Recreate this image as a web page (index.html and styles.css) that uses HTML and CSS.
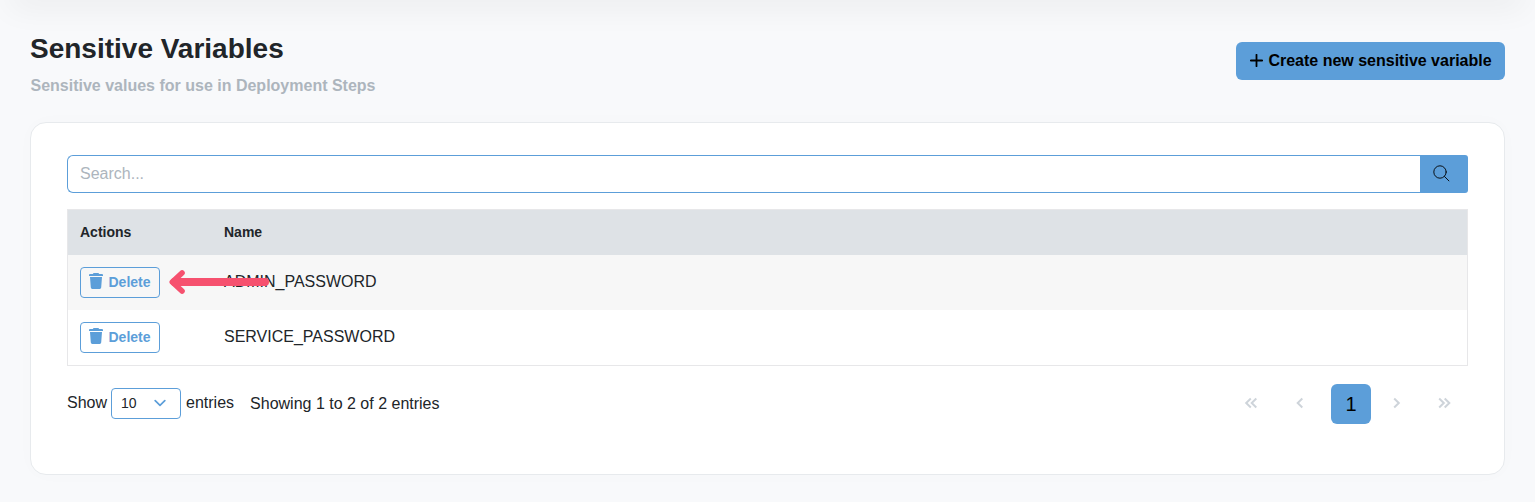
FILE: index.html
```html
<!DOCTYPE html>
<html lang="en">
<head>
<meta charset="utf-8">
<title>Sensitive Variables</title>
<link rel="stylesheet" href="styles.css">
</head>
<body>
<div class="topbar"></div>
<main class="page">
  <header class="page-header">
    <div class="heading">
      <h1 class="title">Sensitive Variables</h1>
      <p class="subtitle">Sensitive values for use in Deployment Steps</p>
    </div>
    <button class="create"><svg width="13" height="13" viewBox="0 0 13 13"><path d="M6.500 .8v11.400M.8 6.500h11.400" fill="none" stroke="#000" stroke-width="1.800" stroke-linecap="round"/></svg>Create new sensitive variable</button>
  </header>
  <section class="card">
    <div class="search">
      <input class="search-input" type="text" placeholder="Search...">
      <button class="search-button" aria-label="Search"><svg width="17" height="17" viewBox="0 0 17 17"><g fill="none" stroke="#000" stroke-width=".9" stroke-linecap="round"><circle cx="7" cy="7" r="6.200"/><path d="M11.500 11.500l4.400 4.400"/></g></svg></button>
    </div>
    <table class="table">
      <thead>
        <tr><th class="actions">Actions</th><th>Name</th></tr>
      </thead>
      <tbody>
        <tr>
          <td class="actions"><button class="delete"><svg width="14" height="16" viewBox="0 0 14 16"><path d="M4.600 0h4.800l.8 1H13q1 0 1 1v1H0V2q0-1 1-1h2.800zM1 4h12l-.8 10.600q-.1 1.400-1.500 1.400H3.300q-1.400 0-1.500-1.400z" fill="#5c9ed9"/></svg>Delete</button>
            <svg class="pointer" width="102" height="26" viewBox="0 0 102 26"><path d="M14 4L4.300 13 14 22M5 13h92" fill="none" stroke="#f6516f" stroke-width="5.600" stroke-linecap="round" stroke-linejoin="round"/><path d="M6.500 13h90.500" stroke="#f6516f" stroke-width="8" stroke-linecap="round"/></svg>
          </td>
          <td>ADMIN_PASSWORD</td>
        </tr>
        <tr>
          <td class="actions"><button class="delete"><svg width="14" height="16" viewBox="0 0 14 16"><path d="M4.600 0h4.800l.8 1H13q1 0 1 1v1H0V2q0-1 1-1h2.800zM1 4h12l-.8 10.600q-.1 1.400-1.500 1.400H3.300q-1.400 0-1.500-1.400z" fill="#5c9ed9"/></svg>Delete</button></td>
          <td>SERVICE_PASSWORD</td>
        </tr>
      </tbody>
    </table>
    <footer class="footer">
      <div class="length"><span class="length-label">Show</span>
        <div class="select"><span>10</span><svg width="12" height="8" viewBox="0 0 12 8"><path d="M1.200 1.700L6 6.300l4.800-4.600" fill="none" stroke="#5c9ed9" stroke-width="1.700" stroke-linecap="round" stroke-linejoin="round"/></svg></div>
        <span class="length-label">entries</span></div>
      <div class="info">Showing 1 to 2 of 2 entries</div>
      <nav class="pager">
        <span class="page-link"><svg width="14" height="12" viewBox="0 0 14 12"><path d="M6.800 1.500L2.200 6l4.600 4.500M12.300 1.500L7.700 6l4.600 4.500"/></svg></span>
        <span class="page-link"><svg width="14" height="12" viewBox="0 0 14 12"><path d="M9.300 1.500L4.700 6l4.600 4.500"/></svg></span>
        <span class="page-link current">1</span>
        <span class="page-link"><svg width="14" height="12" viewBox="0 0 14 12"><path d="M4.200 1.500L8.800 6l-4.600 4.500"/></svg></span>
        <span class="page-link"><svg width="14" height="12" viewBox="0 0 14 12"><path d="M1.200 1.500L5.800 6l-4.600 4.500M6.700 1.500L11.300 6l-4.600 4.500"/></svg></span>
      </nav>
    </footer>
  </section>
</main>
</body>
</html>
```
FILE: styles.css
```css
* { box-sizing: border-box; }
body {
  margin: 0;
  height: 502px;
  overflow: hidden;
  background: #f8f9fb;
  color: #212529;
  font: 16px/24px "Liberation Sans", Arial, sans-serif;
}
button { font-family: inherit; }
svg { display: block; flex: none; }
.topbar {
  height: 20px;
  margin: -20px 10px 0;
  box-shadow: 0 6px 32px rgba(0, 0, 0, .07);
}
.page { padding: 31px 30px 0; }
.page-header {
  display: flex;
  justify-content: space-between;
  height: 91px;
}
.heading { padding-top: 1px; }
.title {
  margin: 0;
  font-size: 28px;
  line-height: 34px;
  font-weight: 700;
}
.subtitle {
  margin: 8px 0 0 .5px;
  color: #adb5bd;
  font-weight: 700;
}
.create {
  display: flex;
  align-items: center;
  justify-content: center;
  gap: 5px;
  width: 269px;
  height: 38px;
  margin-top: 11px;
  padding: 0 0 0 1px;
  border: 0;
  border-radius: 6px;
  background: #5c9ed9;
  color: #000;
  font-size: 16px;
  font-weight: 700;
  white-space: nowrap;
}
.create svg { margin-top: -2px; }
.card {
  height: 353px;
  padding: 32px 36px 0;
  border: 1px solid #e7eaed;
  border-radius: 16px;
  background: #fff;
  box-shadow: 0 0 20px rgba(0, 0, 0, .015);
}
.search {
  display: flex;
  height: 38px;
  margin-bottom: 16px;
}
.search-input {
  flex: 1;
  padding: 0 12px;
  border: 1px solid #5c9ed9;
  border-right: 0;
  border-radius: 6px 0 0 6px;
  background: #fff;
  font: inherit;
}
.search-input::placeholder { color: #adb5bd; }
.search-button {
  width: 48px;
  padding: 0 0 2px 13px;
  border: 0;
  border-radius: 0 3px 3px 0;
  background: #5c9ed9;
}
.table {
  width: 100%;
  border: 1px solid #e7e7e9;
  border-collapse: separate;
  border-spacing: 0;
}
.table th {
  height: 45px;
  padding: 0 12px 2px;
  background: #dee2e6;
  font-size: 14px;
  text-align: left;
}
.table td {
  height: 55px;
  padding: 0 12px 2px;
}
.table .actions { width: 144px; }
.table td.actions {
  position: relative;
  padding-bottom: 0;
}
.table tbody tr:first-child td { background: #f7f7f7; }
.delete {
  display: flex;
  align-items: center;
  gap: 5.500px;
  width: 80px;
  height: 31px;
  padding: 0 0 2px 8px;
  border: 1px solid #5c9ed9;
  border-radius: 4px;
  background: #fff;
  color: #5c9ed9;
  font-size: 14px;
  font-weight: 700;
}
.delete svg { margin-top: -1px; }
tr:first-child .delete { background: transparent; }
.pointer {
  position: absolute;
  z-index: 1;
  top: 14px;
  left: 100px;
}
.footer {
  display: flex;
  padding-top: 18px;
}
.length {
  display: flex;
  gap: 5px;
  padding-top: 4px;
}
.length-label { padding-top: 3px; }
.select {
  display: flex;
  align-items: center;
  justify-content: space-between;
  width: 70px;
  height: 31px;
  margin-left: -1px;
  padding: 0 14px 1px 9px;
  border: 1px solid #5c9ed9;
  border-radius: 4px;
  font-size: 14px;
}
.info { margin: 8px 0 0 16px; }
.pager {
  display: flex;
  gap: 8.500px;
  margin: 0 3px 0 auto;
}
.page-link {
  display: flex;
  align-items: center;
  justify-content: center;
  width: 40px;
  height: 40px;
}
.page-link svg {
  margin-top: -3px;
  fill: none;
  stroke: #ced4da;
  stroke-width: 2;
}
.current {
  margin: 0 -3px 0 3px;
  border-radius: 6px;
  background: #5c9ed9;
  color: #000;
  font-size: 20px;
}
```
